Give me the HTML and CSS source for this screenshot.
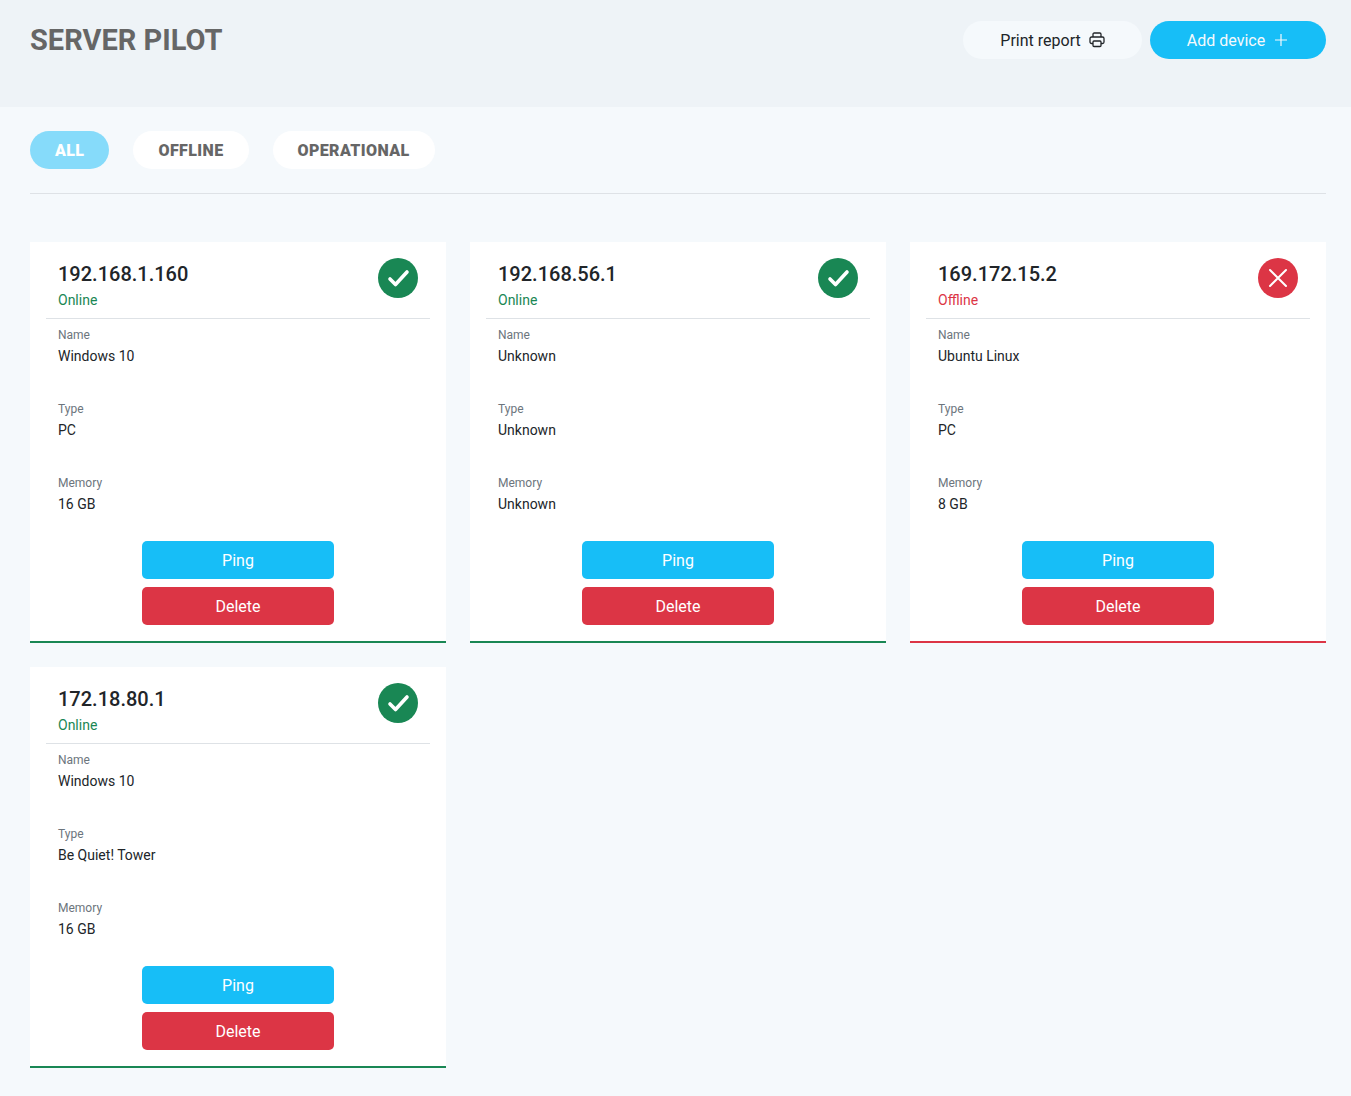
FILE: index.html
```html
<!DOCTYPE html>
<html lang="en">
<head>
<meta charset="utf-8">
<title>Server Pilot</title>
<link rel="stylesheet" href="styles.css">
</head>
<body>
<header class="topbar">
  <h1 class="brand">SERVER PILOT</h1>
  <div class="actions">
    <button class="pill pill-light">Print report
      <svg class="ico" viewBox="0 0 16 16" fill="none" stroke="currentColor" stroke-width="1.3"><path d="M4 5V2.2C4 1.5 4.5 1 5.2 1h5.6c.7 0 1.2.5 1.2 1.2V5"/><path d="M4 11.5H2.5c-.8 0-1.5-.7-1.5-1.5V6.500C1 5.700 1.700 5 2.500 5h11c.8 0 1.500.7 1.500 1.500V10c0 .8-.7 1.500-1.500 1.500H12"/><rect x="4" y="9" width="8" height="5.500" rx="1"/></svg>
    </button>
    <button class="pill pill-blue">Add device
      <svg class="ico" viewBox="0 0 16 16" fill="none" stroke="currentColor" stroke-width="1.200"><path d="M8 2v12M2 8h12"/></svg>
    </button>
  </div>
</header>
<main class="content">
  <nav class="filters">
    <button class="tab tab-active">ALL</button>
    <button class="tab">OFFLINE</button>
    <button class="tab">OPERATIONAL</button>
  </nav>
  <section class="grid">
    <article class="card card-on">
      <div class="card-head">
        <div><h2 class="ip">192.168.1.160</h2><div class="status on">Online</div></div>
        <span class="badge badge-on"><svg viewBox="0 0 40 40" fill="none" stroke="#fff" stroke-width="3.600" stroke-linecap="round" stroke-linejoin="round"><path d="M12 21l5.500 5.500L29 14"/></svg></span>
      </div>
      <dl class="info">
        <div class="row"><dt>Name</dt><dd>Windows 10</dd></div>
        <div class="row"><dt>Type</dt><dd>PC</dd></div>
        <div class="row"><dt>Memory</dt><dd>16 GB</dd></div>
      </dl>
      <div class="btns"><button class="btn btn-ping">Ping</button><button class="btn btn-del">Delete</button></div>
    </article>
    <article class="card card-on">
      <div class="card-head">
        <div><h2 class="ip">192.168.56.1</h2><div class="status on">Online</div></div>
        <span class="badge badge-on"><svg viewBox="0 0 40 40" fill="none" stroke="#fff" stroke-width="3.600" stroke-linecap="round" stroke-linejoin="round"><path d="M12 21l5.500 5.500L29 14"/></svg></span>
      </div>
      <dl class="info">
        <div class="row"><dt>Name</dt><dd>Unknown</dd></div>
        <div class="row"><dt>Type</dt><dd>Unknown</dd></div>
        <div class="row"><dt>Memory</dt><dd>Unknown</dd></div>
      </dl>
      <div class="btns"><button class="btn btn-ping">Ping</button><button class="btn btn-del">Delete</button></div>
    </article>
    <article class="card card-off">
      <div class="card-head">
        <div><h2 class="ip">169.172.15.2</h2><div class="status off">Offline</div></div>
        <span class="badge badge-off"><svg viewBox="0 0 40 40" fill="none" stroke="#fff" stroke-width="2" stroke-linecap="round"><path d="M12 12l16 16M28 12L12 28"/></svg></span>
      </div>
      <dl class="info">
        <div class="row"><dt>Name</dt><dd>Ubuntu Linux</dd></div>
        <div class="row"><dt>Type</dt><dd>PC</dd></div>
        <div class="row"><dt>Memory</dt><dd>8 GB</dd></div>
      </dl>
      <div class="btns"><button class="btn btn-ping">Ping</button><button class="btn btn-del">Delete</button></div>
    </article>
    <article class="card card-on">
      <div class="card-head">
        <div><h2 class="ip">172.18.80.1</h2><div class="status on">Online</div></div>
        <span class="badge badge-on"><svg viewBox="0 0 40 40" fill="none" stroke="#fff" stroke-width="3.600" stroke-linecap="round" stroke-linejoin="round"><path d="M12 21l5.500 5.500L29 14"/></svg></span>
      </div>
      <dl class="info">
        <div class="row"><dt>Name</dt><dd>Windows 10</dd></div>
        <div class="row"><dt>Type</dt><dd>Be Quiet! Tower</dd></div>
        <div class="row"><dt>Memory</dt><dd>16 GB</dd></div>
      </dl>
      <div class="btns"><button class="btn btn-ping">Ping</button><button class="btn btn-del">Delete</button></div>
    </article>
  </section>
</main>
</body>
</html>
```
FILE: styles.css
```css
* { box-sizing: border-box; }
html, body { margin: 0; padding: 0; }
body {
  background: #f5f9fc;
  font-family: Roboto, "Liberation Sans", sans-serif;
  color: #212529;
  min-height: 1096px;
}
button { font-family: inherit; border: 0; cursor: pointer; }

.topbar {
  height: 107px;
  background: #eef3f7;
  padding: 21px 25px 0 30px;
  display: flex;
  justify-content: space-between;
  align-items: flex-start;
}
.brand {
  margin: 0;
  font-size: 29px;
  line-height: 39px;
  font-weight: 700;
  color: #666;
}
.actions { display: flex; gap: 8px; }
.pill {
  height: 38px;
  border-radius: 19px;
  font-size: 16px;
  display: flex;
  align-items: center;
  justify-content: center;
  gap: 8px;
  padding: 0;
}
.pill-light { width: 179px; background: #f5f9fc; color: #212529; }
.pill-blue { width: 176px; background: #17bef7; color: #f5f9fc; }
.ico { width: 16px; height: 16px; display: block; }

.content { padding: 24px 25px 0 30px; }
.filters {
  display: flex;
  gap: 24px;
  padding-bottom: 24px;
  border-bottom: 1px solid #dee2e6;
  margin-bottom: 48px;
}
.tab {
  height: 38px;
  padding: 0 25px;
  border-radius: 19px;
  background: #fff;
  color: #666;
  font-size: 16px;
  font-weight: 900;
  letter-spacing: 0.4px;
}
.tab-active { background: #86dbfa; color: #fff; }

.grid {
  display: grid;
  grid-template-columns: repeat(3, 416px);
  column-gap: 24px;
  row-gap: 24px;
  padding-bottom: 28px;
}
.card {
  height: 401px;
  background: #fff;
  padding: 0 16px;
  border-bottom: 2px solid;
}
.card-on { border-color: #198754; }
.card-off { border-color: #dc3545; }
.card-head {
  height: 77px;
  padding: 16px 12px 0;
  border-bottom: 1px solid #dee2e6;
  display: flex;
  justify-content: space-between;
  align-items: flex-start;
}
.ip {
  margin: 4px 0 0;
  font-size: 20px;
  line-height: 24px;
  font-weight: 500;
  color: #212529;
}
.status { font-size: 14px; line-height: 20px; margin-top: 4px; }
.on { color: #198754; }
.off { color: #dc3545; }
.badge {
  width: 40px;
  height: 40px;
  border-radius: 50%;
  display: block;
}
.badge svg { display: block; width: 40px; height: 40px; }
.badge-on { background: #198754; }
.badge-off { background: #dc3545; }

.info { margin: 0; padding: 8px 12px 0; height: 214px; }
.row { height: 74px; }
dt { font-size: 12px; line-height: 16px; color: #6c757d; }
dd { margin: 2px 0 0; font-size: 14px; line-height: 22px; color: #212529; }

.btns {
  display: flex;
  flex-direction: column;
  align-items: center;
  gap: 8px;
  padding-top: 8px;
}
.btn {
  width: 192px;
  height: 38px;
  border-radius: 5px;
  color: #fff;
  font-size: 16px;
}
.btn-ping { background: #17bef7; }
.btn-del { background: #dc3545; }
```
